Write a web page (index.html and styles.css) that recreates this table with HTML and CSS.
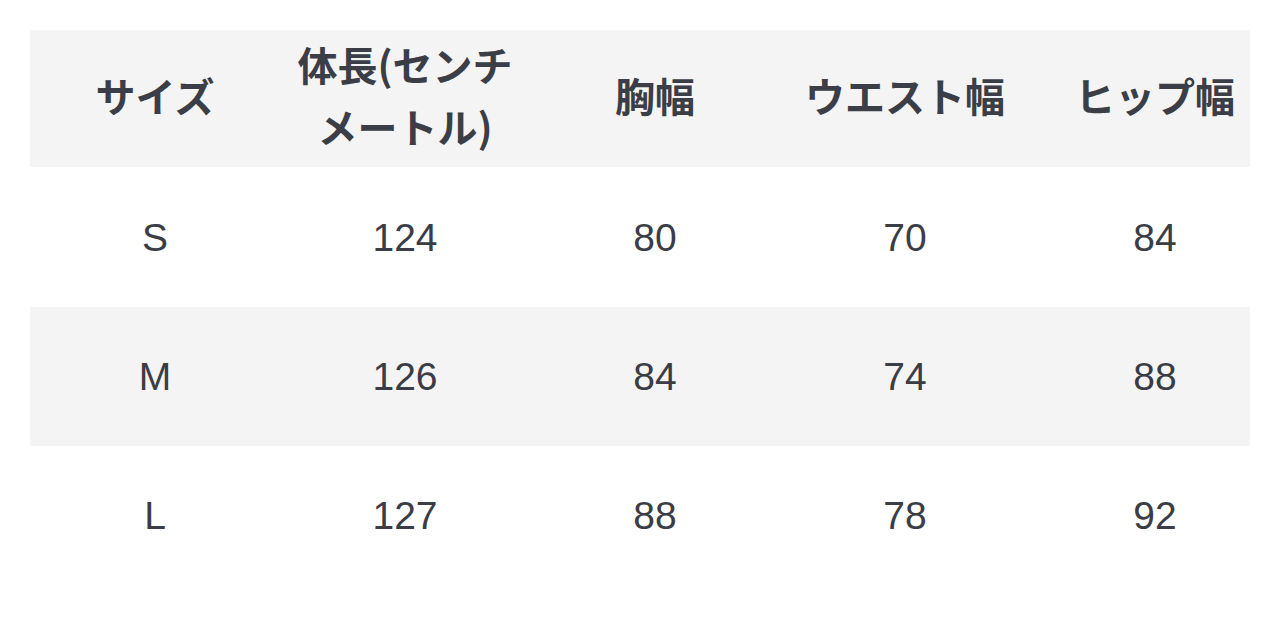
FILE: index.html
```html
<!DOCTYPE html>
<html lang="ja">
<head>
<meta charset="utf-8">
<title>サイズ表</title>
<link rel="stylesheet" href="styles.css">
</head>
<body>
<div class="size-table">
  <div class="row head">
    <div class="cell">サイズ</div>
    <div class="cell">体長(センチメートル)</div>
    <div class="cell">胸幅</div>
    <div class="cell">ウエスト幅</div>
    <div class="cell">ヒップ幅</div>
  </div>
  <div class="row body first">
    <div class="cell">S</div>
    <div class="cell">124</div>
    <div class="cell">80</div>
    <div class="cell">70</div>
    <div class="cell">84</div>
  </div>
  <div class="row body alt">
    <div class="cell">M</div>
    <div class="cell">126</div>
    <div class="cell">84</div>
    <div class="cell">74</div>
    <div class="cell">88</div>
  </div>
  <div class="row body">
    <div class="cell">L</div>
    <div class="cell">127</div>
    <div class="cell">88</div>
    <div class="cell">78</div>
    <div class="cell">92</div>
  </div>
</div>
</body>
</html>
```
FILE: styles.css
```css
html, body {
  margin: 0;
  background: #ffffff;
}
body {
  padding: 30px 0 0 30px;
  font-family: "Liberation Sans", "Noto Sans CJK JP", sans-serif;
  color: #3a3d45;
}
.size-table {
  width: 1220px;
  display: flex;
  flex-direction: column;
}
.row {
  display: grid;
  grid-template-columns: repeat(5, 250px);
  align-items: center;
  box-sizing: border-box;
}
.head {
  height: 137px;
  padding-bottom: 8px;
  background: #f4f4f4;
  font-family: "Noto Sans CJK JP", sans-serif;
  font-weight: 700;
  font-size: 40px;
  line-height: 62px;
  color: #3b3e46;
}
.body {
  height: 139px;
  font-size: 39px;
  line-height: 1;
}
.first {
  height: 140px;
}
.alt {
  background: #f4f4f4;
}
.cell {
  text-align: center;
  padding: 0 10px;
}
```
